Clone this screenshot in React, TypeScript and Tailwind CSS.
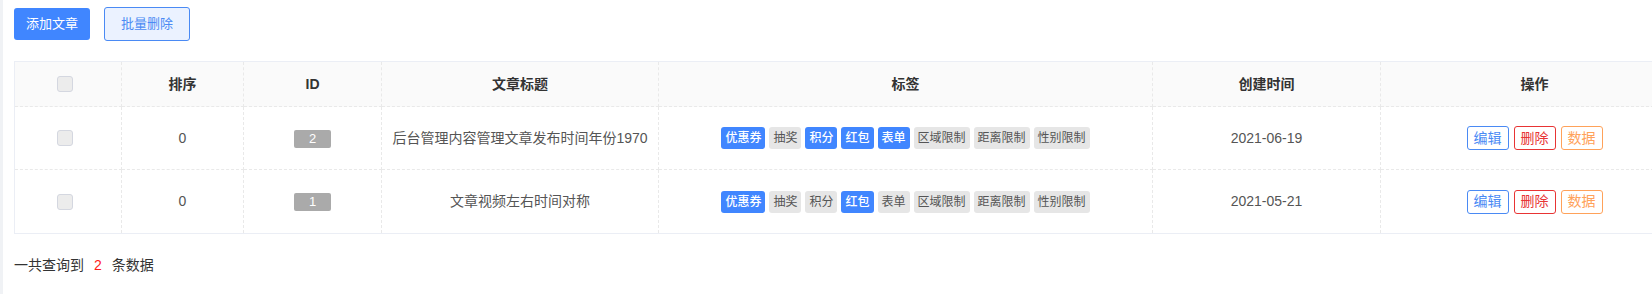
import React from "react";

const font = { fontFamily: '"Liberation Sans", "Noto Sans CJK SC", sans-serif' };

type Row = {
  id: number;
  sort: number;
  title: string;
  tags: { label: string; on: boolean }[];
  date: string;
};

const tagNames = ["优惠券", "抽奖", "积分", "红包", "表单", "区域限制", "距离限制", "性别限制"];

const rows: Row[] = [
  {
    id: 2,
    sort: 0,
    title: "后台管理内容管理文章发布时间年份1970",
    tags: tagNames.map((t, i) => ({ label: t, on: [0, 2, 3, 4].includes(i) })),
    date: "2021-06-19",
  },
  {
    id: 1,
    sort: 0,
    title: "文章视频左右时间对称",
    tags: tagNames.map((t, i) => ({ label: t, on: [0, 3].includes(i) })),
    date: "2021-05-21",
  },
];

function Checkbox() {
  return <span className="block w-4 h-4 rounded-[3px] border border-[#d4d7e0] bg-[#ececec]" />;
}

const cell = "border-r border-b border-dashed border-[#e9e9e9] text-center align-middle";

export default function App() {
  return (
    <div className="flex w-[1652px] h-[294px] overflow-hidden bg-white text-[14px]" style={font}>
      <div className="w-[3px] shrink-0 bg-[#f0f2f5]" />
      <div className="flex-1 pl-[11px] min-w-0">
        <div className="flex items-center gap-[14px] pt-[7px]">
          <button className="h-[32px] w-[76px] rounded-[3px] bg-[#4086ff] text-white text-[13px]">添加文章</button>
          <button className="h-[34px] w-[86px] rounded-[3px] border border-[#4a8af4] bg-[#ebf2ff] text-[#4a8af4] text-[13px]">
            批量删除
          </button>
        </div>

        <div className="mt-[20px] w-[1675px] border border-[#ebeef5] border-r-0">
          <table className="table-fixed border-separate border-spacing-0 w-full">
            <colgroup>
              <col className="w-[107px]" />
              <col className="w-[122px]" />
              <col className="w-[138px]" />
              <col className="w-[277px]" />
              <col className="w-[494px]" />
              <col className="w-[228px]" />
              <col className="w-[308px]" />
            </colgroup>
            <thead>
              <tr className="h-[45px] bg-[#fafafa] text-[#333] font-bold">
                <th className={cell}>
                  <div className="flex justify-center pr-[6px]">
                    <Checkbox />
                  </div>
                </th>
                <th className={cell}>排序</th>
                <th className={cell}>ID</th>
                <th className={cell}>文章标题</th>
                <th className={cell}>标签</th>
                <th className={cell}>创建时间</th>
                <th className={cell}>操作</th>
              </tr>
            </thead>
            <tbody className="text-[#555]">
              {rows.map((r, ri) => {
                const c = ri === rows.length - 1 ? cell.replace("border-b ", "") : cell;
                return (
                  <tr key={r.id} className="h-[63px]">
                    <td className={c}>
                      <div className="flex justify-center pr-[6px]">
                        <Checkbox />
                      </div>
                    </td>
                    <td className={c}>{r.sort}</td>
                    <td className={c}>
                      <span className="inline-block w-[37px] h-[18px] leading-[18px] rounded-[2px] bg-[#aaaaaa] text-white text-[13px]">
                        {r.id}
                      </span>
                    </td>
                    <td className={c}>{r.title}</td>
                    <td className={c}>
                      <div className="flex justify-center gap-[4px]">
                        {r.tags.map((t) => (
                          <span
                            key={t.label}
                            className={
                              t.on
                                ? "h-[22px] leading-[22px] px-[4px] rounded-[3px] text-[12px] bg-[#4086ff] text-white font-medium"
                                : "h-[22px] leading-[22px] px-[4px] rounded-[3px] text-[12px] bg-[#e6e6e6] text-[#555]"
                            }
                          >
                            {t.label}
                          </span>
                        ))}
                      </div>
                    </td>
                    <td className={c}>{r.date}</td>
                    <td className={c}>
                      <div className="flex justify-center gap-[5px]">
                        <button className="h-[24px] px-[6px] rounded-[3px] border border-[#4a8af4] text-[#4a8af4] bg-white">编辑</button>
                        <button className="h-[24px] px-[6px] rounded-[3px] border border-[#e83434] text-[#e83434] bg-white">删除</button>
                        <button className="h-[24px] px-[6px] rounded-[3px] border border-[#ffa25a] text-[#ffa25a] bg-white">数据</button>
                      </div>
                    </td>
                  </tr>
                );
              })}
            </tbody>
          </table>
        </div>

        <div className="mt-[21px] text-[#333] flex items-center">
          <span>一共查询到</span>
          <span className="text-[#ff1a1a] mx-[10px]">2</span>
          <span>条数据</span>
        </div>
      </div>
    </div>
  );
}
